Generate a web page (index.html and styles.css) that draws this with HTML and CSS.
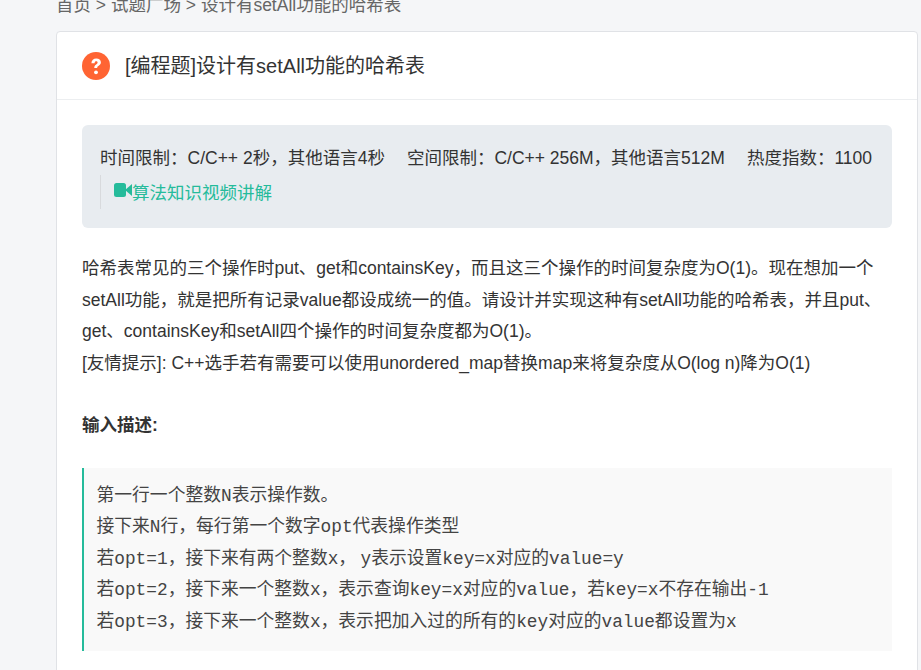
FILE: index.html
```html
<!DOCTYPE html>
<html lang="zh">
<head>
<meta charset="utf-8">
<title>设计有setAll功能的哈希表</title>
<link rel="stylesheet" href="styles.css">
</head>
<body>
<nav class="crumb">首页 &gt; 试题广场 &gt; 设计有setAll功能的哈希表</nav>
<main class="card">
  <header class="card-head">
    <svg class="q-icon" viewBox="0 0 28 28" width="28" height="28"><circle cx="14" cy="14" r="14" fill="#ff6433"/><path d="M9.4 11.2c.1-3 2.100-4.800 4.900-4.800 2.700 0 4.600 1.600 4.600 3.900 0 1.700-.9 2.700-2.200 3.500-1.200.8-1.500 1.200-1.500 2.300H12.300c-.1-1.800.4-2.800 1.800-3.700 1-.7 1.500-1.100 1.500-1.900 0-.8-.6-1.300-1.400-1.300-.9 0-1.500.6-1.600 2z" fill="#fff"/><circle cx="14" cy="20.300" r="1.900" fill="#fff"/></svg>
    <h1 class="title">[编程题]设计有setAll功能的哈希表</h1>
  </header>
  <section class="card-body">
    <div class="limits">
      <div class="limit-row"><span>时间限制：C/C++ 2秒，其他语言4秒</span><span>空间限制：C/C++ 256M，其他语言512M</span><span>热度指数：1100</span></div>
      <div class="video-row">
        <svg class="cam" viewBox="0 0 18 14" width="18" height="14"><rect x="0" y="0" width="12" height="14" rx="2.500" fill="#25bb9b"/><path d="M11 7l7-6v12z" fill="#25bb9b"/></svg><a class="video-link">算法知识视频讲解</a>
      </div>
    </div>
    <div class="desc">
      <p>哈希表常见的三个操作时put、get和containsKey，而且这三个操作的时间复杂度为O(1)。现在想加一个setAll功能，就是把所有记录value都设成统一的值。请设计并实现这种有setAll功能的哈希表，并且put、get、containsKey和setAll四个操作的时间复杂度都为O(1)。</p>
      <p>[友情提示]: C++选手若有需要可以使用unordered_map替换map来将复杂度从O(log n)降为O(1)</p>
    </div>
    <h2 class="sub">输入描述:</h2>
    <pre class="code">第一行一个整数N表示操作数。
接下来N行，每行第一个数字opt代表操作类型
若opt=1，接下来有两个整数x，&#8197;y表示设置key=x对应的value=y
若opt=2，接下来一个整数x，表示查询key=x对应的value，若key=x不存在输出-1
若opt=3，接下来一个整数x，表示把加入过的所有的key对应的value都设置为x</pre>
  </section>
</main>
</body>
</html>
```
FILE: styles.css
```css
html, body { margin: 0; height: 100%; overflow: hidden; }
body {
  background: #f5f6f8;
  font-family: "Liberation Sans", "Noto Sans CJK SC", sans-serif;
  color: #333;
}
.crumb {
  height: 31px;
  margin-left: 56px;
  font-size: 17.5px;
  line-height: 10px;
  color: #666;
}
.card {
  width: 860px;
  margin-left: 56px;
  background: #fff;
  border: 1px solid #e0e2e6;
  border-radius: 4px;
}
.card-head {
  display: flex;
  align-items: center;
  gap: 15px;
  height: 67px;
  padding-left: 25px;
  border-bottom: 1px solid #eceef0;
}
.q-icon { flex: none; }
.title { margin: -2px 0 0; font-size: 20px; font-weight: 400; color: #333; }
.card-body { padding: 25px; }
.limits {
  background: #e8ecf0;
  border-radius: 6px;
  height: 103px;
  padding: 18px;
  box-sizing: border-box;
  font-size: 17.5px;
}
.limit-row { display: flex; gap: 22px; line-height: 31px; white-space: nowrap; }
.video-row {
  display: flex;
  align-items: center;
  height: 34px;
  margin-top: 1px;
  padding-left: 13px;
  border-left: 1px solid #d8dadd;
}
.cam { flex: none; margin-top: -4px; }
.video-link { color: #25bb9b; font-size: 17.5px; margin-top: -2px; }
.desc { margin-top: 25px; font-size: 17.5px; line-height: 31.500px; }
.desc p { margin: 0; }
.sub { margin: 31px 0 0; font-size: 17.5px; font-weight: 700; line-height: 31.500px; }
.code {
  margin: 26px 0 0;
  padding: 13px 15px 13px 12.500px;
  background: #f9f9f9;
  border-left: 2px solid #25bb9b;
  font-family: "Liberation Mono", "Noto Sans CJK SC", monospace;
  font-size: 17.8px;
  line-height: 31.500px;
  color: #444;
  white-space: pre-wrap;
}
```
